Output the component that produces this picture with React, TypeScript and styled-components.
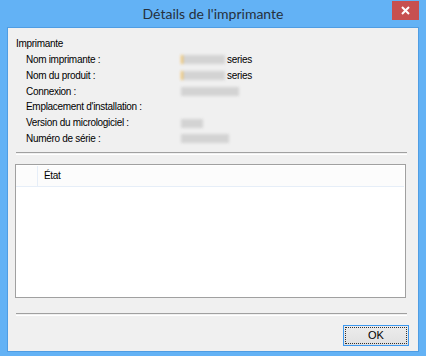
import React from "react";
import styled, { createGlobalStyle } from "styled-components";

const Global = createGlobalStyle`
  html, body { margin: 0; padding: 0; }
  body { width: 426px; height: 356px; overflow: hidden; background: #63b2f5; }
`;

const Window = styled.div`
  width: 426px;
  height: 356px;
  box-sizing: border-box;
  background: #63b2f5;
  padding: 0 7px 7px 7px;
  display: flex;
  flex-direction: column;
  font-family: "Liberation Sans", Arial, sans-serif;
`;

const TitleBar = styled.div`
  height: 27px;
  display: grid;
  grid-template-columns: 1fr auto 1fr;
  align-items: start;
`;

const Title = styled.div`
  grid-column: 2;
  font-family: Lato, "Noto Sans", sans-serif;
  font-size: 14px;
  color: #26303c;
  line-height: 28px;
`;

const CloseButton = styled.div`
  grid-column: 3;
  justify-self: end;
  width: 27px;
  height: 19px;
  margin-top: 1px;
  background: #c75050;
  display: flex;
  align-items: center;
  justify-content: center;
`;

const Client = styled.div`
  flex: 1;
  background: #f0f0f0;
  border: 1px solid #4f9de3;
  display: flex;
  flex-direction: column;
  padding: 8px 0 5px 0;
`;

const GroupLabel = styled.div`
  font-size: 10px;
  letter-spacing: -0.3px;
  line-height: 16px;
  color: #000;
  padding-left: 8px;
`;

const InfoGrid = styled.div`
  display: grid;
  grid-template-columns: 155px 1fr;
  padding-left: 18px;
  font-size: 10px;
  letter-spacing: -0.3px;
  line-height: 15.8px;
  color: #000;
`;

const Value = styled.div`
  display: flex;
  align-items: center;
  height: 15.8px;
`;

const Blur = styled.span<{ $mark?: boolean; $w: number }>`
  display: inline-block;
  width: ${(p) => p.$w}px;
  height: 9px;
  background: #d3d3d3;
  filter: blur(1.4px);
  border-left: ${(p) => (p.$mark ? "2px solid #f0c060" : "none")};
  margin-right: 2px;
`;

const Separator = styled.div<{ $top: number }>`
  margin: ${(p) => p.$top}px 11px 0 8px;
  height: 1px;
  border-top: 1px solid #a0a0a0;
  border-bottom: 1px solid #ffffff;
`;

const ListView = styled.div`
  margin: 9px 12px 0 7px;
  height: 134px;
  box-sizing: border-box;
  background: #ffffff;
  border: 1px solid #a0a0a0;
  padding: 1px 1px 1px 0;
`;

const Header = styled.div`
  height: 20px;
  display: flex;
  background: #fcfcfc;
  border-bottom: 1px solid #e6eef8;
  font-size: 10px;
  letter-spacing: -0.3px;
  color: #000;
`;

const HeaderCell = styled.div<{ $w?: number }>`
  box-sizing: border-box;
  width: ${(p) => (p.$w ? `${p.$w}px` : "auto")};
  flex: ${(p) => (p.$w ? "none" : "1")};
  border-right: ${(p) => (p.$w ? "1px solid #e6eef8" : "none")};
  padding-left: 6px;
  display: flex;
  align-items: center;
`;

const Footer = styled.div`
  display: flex;
  justify-content: flex-end;
  padding: 9px 9px 0 0;
`;

const OkButton = styled.button`
  width: 66px;
  height: 21px;
  box-sizing: border-box;
  border: 1px solid #3c98f0;
  border-radius: 0;
  background: linear-gradient(#ececec, #e1e1e1);
  padding: 1px;
  font-family: "Liberation Sans", Arial, sans-serif;
  font-size: 11px;
  color: #000;
`;

const FocusRing = styled.div`
  height: 100%;
  box-sizing: border-box;
  border: 1px dotted #303030;
  display: flex;
  align-items: center;
  justify-content: center;
`;

const rows: { label: string; value: React.ReactNode }[] = [
  { label: "Nom imprimante :", value: <><Blur $mark $w={42} />series</> },
  { label: "Nom du produit :", value: <><Blur $mark $w={42} />series</> },
  { label: "Connexion :", value: <Blur $w={58} /> },
  { label: "Emplacement d'installation :", value: null },
  { label: "Version du micrologiciel :", value: <Blur $w={22} /> },
  { label: "Numéro de série :", value: <Blur $w={48} /> },
];

export default function App() {
  return (
    <>
      <Global />
      <Window>
        <TitleBar>
          <Title>Détails de l'imprimante</Title>
          <CloseButton>
            <svg width="9" height="9" viewBox="0 0 9 9">
              <path d="M1 1L8 8M8 1L1 8" stroke="#fff" strokeWidth="2" />
            </svg>
          </CloseButton>
        </TitleBar>
        <Client>
          <GroupLabel>Imprimante</GroupLabel>
          <InfoGrid>
            {rows.map((r) => (
              <React.Fragment key={r.label}>
                <div>{r.label}</div>
                <Value>{r.value}</Value>
              </React.Fragment>
            ))}
          </InfoGrid>
          <Separator $top={5} />
          <ListView>
            <Header>
              <HeaderCell $w={22} />
              <HeaderCell>État</HeaderCell>
            </Header>
          </ListView>
          <Separator $top={15} />
          <Footer>
            <OkButton>
              <FocusRing>OK</FocusRing>
            </OkButton>
          </Footer>
        </Client>
      </Window>
    </>
  );
}
